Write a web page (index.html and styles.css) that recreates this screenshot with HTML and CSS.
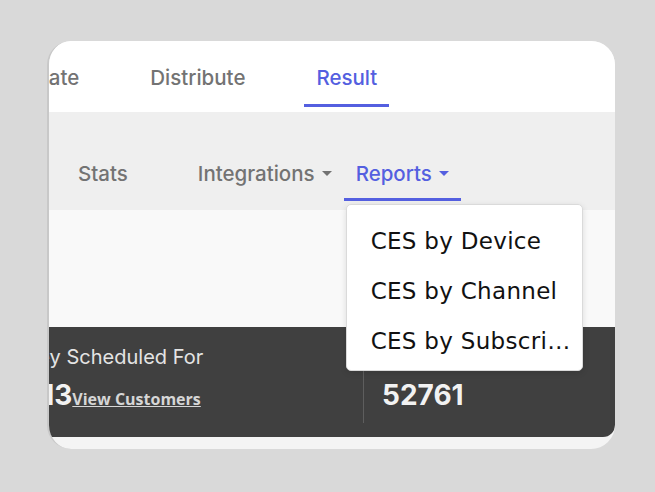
FILE: index.html
```html
<!DOCTYPE html>
<html lang="en">
<head>
<meta charset="utf-8">
<title>Survey Result</title>
<link rel="stylesheet" href="styles.css">
</head>
<body>
<div class="card">
  <nav class="tabs">
    <a class="tab tab-first">Create</a>
    <a class="tab">Distribute</a>
    <a class="tab active">Result</a>
  </nav>
  <div class="subtabs">
    <span class="subtab subtab-stats">Stats</span>
    <span class="subtab">Integrations<i class="caret"></i></span>
    <div class="subtab active">Reports<i class="caret"></i>
      <ul class="menu">
        <li>CES by Device</li>
        <li>CES by Channel</li>
        <li>CES by Subscription</li>
      </ul>
    </div>
  </div>
  <div class="blank"></div>
  <div class="stats">
    <div class="stat stat-first">
      <div class="stat-label">Survey Scheduled For</div>
      <div class="stat-value">12413<a class="stat-link">View Customers</a></div>
    </div>
    <div class="stat stat-second">
      <div class="stat-label">Total Responses</div>
      <div class="stat-value">52761</div>
    </div>
  </div>
</div>
</body>
</html>
```
FILE: styles.css
```css
html, body {
  margin: 0;
  padding: 0;
}
body {
  background: #d9d9d9;
  font-family: Inter, "Noto Sans", sans-serif;
  width: 655px;
  height: 492px;
  overflow: hidden;
}
.card {
  margin: 41px 0 0 47px;
  width: 568px;
  height: 408px;
  box-sizing: border-box;
  border-left: 2px solid #c8c8c8;
  border-radius: 24px;
  background: #f4f4f4;
  overflow: hidden;
}
.tabs {
  display: flex;
  gap: 47px;
  height: 71px;
  background: #ffffff;
}
.tab {
  display: flex;
  align-items: center;
  box-sizing: border-box;
  height: 66px;
  padding: 10px 12px 0;
  border-bottom: 3px solid transparent;
  font-size: 20.5px;
  font-weight: 500;
  color: #737373;
  white-space: nowrap;
}
.tab-first {
  margin-left: -47px;
}
.tab.active {
  color: #545fe0;
  border-bottom-color: #545fe0;
}
.subtabs {
  display: flex;
  align-items: flex-start;
  height: 98px;
  padding-left: 17px;
  background: #efefef;
}
.subtab {
  position: relative;
  display: flex;
  align-items: center;
  box-sizing: border-box;
  height: 89px;
  padding: 36px 12px 0;
  border-bottom: 3px solid transparent;
  font-size: 20.5px;
  font-weight: 500;
  color: #737373;
  white-space: nowrap;
}
.subtab-stats {
  margin-right: 46px;
}
.subtab.active {
  color: #545fe0;
  border-bottom-color: #545fe0;
}
.caret {
  display: inline-block;
  width: 0;
  height: 0;
  margin-left: 7px;
  border-left: 5px solid transparent;
  border-right: 5px solid transparent;
  border-top: 5px solid currentColor;
}
.menu {
  position: absolute;
  top: calc(100% + 6px);
  left: 2px;
  width: 237px;
  box-sizing: border-box;
  margin: 0;
  padding: 11px 0 4px;
  list-style: none;
  background: #ffffff;
  border: 1px solid #dadada;
  border-radius: 5px;
  box-shadow: 0 2px 6px rgba(0, 0, 0, 0.12);
}
.menu li {
  height: 50px;
  line-height: 50px;
  padding: 0 10px 0 24px;
  font-family: "DejaVu Sans", sans-serif;
  font-size: 23px;
  letter-spacing: 0.3px;
  font-weight: 400;
  color: #111111;
  white-space: nowrap;
  overflow: hidden;
  text-overflow: ellipsis;
}
.blank {
  height: 117px;
  background: #f9f9f9;
}
.stats {
  display: flex;
  height: 110px;
  margin-left: -72px;
  background: #404040;
  border-radius: 0 0 12px 8px;
}
.stat {
  box-sizing: border-box;
  padding: 18px 18px 0;
}
.stat-first {
  flex: 0 0 386px;
}
.stat-second {
  flex: 1;
  margin: 14px 0;
  padding-top: 4px;
  border-left: 1px solid #5e5e5e;
}
.stat-label {
  font-size: 20px;
  line-height: 24px;
  color: #e4e4e4;
  white-space: nowrap;
}
.stat-value {
  margin-top: 9px;
  font-size: 28px;
  line-height: 34px;
  font-weight: 700;
  color: #f2f2f2;
  white-space: nowrap;
}
.stat-link {
  font-family: "Open Sans", sans-serif;
  font-size: 16px;
  font-weight: 700;
  color: #d6d6d6;
  text-decoration: underline;
}
```
